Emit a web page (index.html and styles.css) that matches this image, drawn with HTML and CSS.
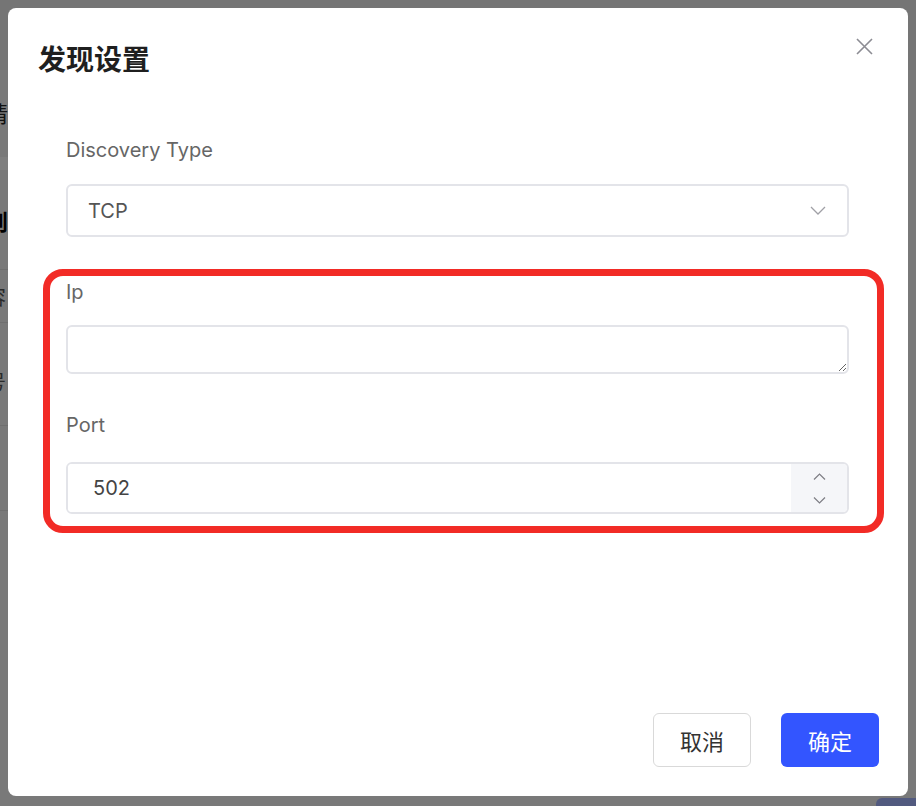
FILE: index.html
```html
<!DOCTYPE html>
<html lang="zh-CN">
<head>
<meta charset="utf-8">
<title>发现设置</title>
<link rel="stylesheet" href="styles.css">
</head>
<body>
<div class="page">
  <header class="page-top"></header>
  <main class="page-main">
    <div class="page-side">
      <p class="side-note">请</p>
      <div class="side-tabs"></div>
      <h3 class="side-title">则</h3>
      <div class="side-row side-row-a">容</div>
      <div class="side-row side-row-b">号</div>
      <div class="side-row side-row-c"></div>
      <div class="side-row side-row-d"></div>
    </div>
  </main>
  <div class="page-actions"><button class="page-btn" type="button">新增</button></div>
</div>

<div class="mask">
  <div class="modal" role="dialog" aria-labelledby="dlg-title">
    <div class="modal-header">
      <h2 class="modal-title" id="dlg-title">发现设置</h2>
      <button class="modal-close" type="button" aria-label="关闭">
        <svg width="17" height="17" viewBox="0 0 17 17"><path d="M1 1L16 16M16 1L1 16" stroke="#8c8c93" stroke-width="1.6" fill="none"/></svg>
      </button>
    </div>

    <form class="form">
      <div class="form-item">
        <label class="form-label">Discovery Type</label>
        <div class="select">
          <span class="select-value">TCP</span>
          <svg class="select-arrow" width="16" height="9" viewBox="0 0 16 9"><path d="M1 1L8 8L15 1" stroke="#a0a0a6" stroke-width="1.3" fill="none"/></svg>
        </div>
      </div>

      <div class="highlight">
        <div class="form-item">
          <label class="form-label label-ip">Ip</label>
          <textarea class="textarea" rows="1"></textarea>
        </div>
        <div class="form-item item-port">
          <label class="form-label label-port">Port</label>
          <div class="number">
            <input class="number-input" type="text" value="502">
            <div class="number-spin">
              <span class="spin-btn"><svg width="13" height="7" viewBox="0 0 13 7"><path d="M1 6.5L6.5 1L12 6.5" stroke="#7d7d84" stroke-width="1.2" fill="none"/></svg></span>
              <span class="spin-btn"><svg width="13" height="7" viewBox="0 0 13 7"><path d="M1 0.5L6.5 6L12 0.5" stroke="#7d7d84" stroke-width="1.2" fill="none"/></svg></span>
            </div>
          </div>
        </div>
      </div>
    </form>

    <div class="modal-footer">
      <button class="btn btn-default" type="button">取消</button>
      <button class="btn btn-primary" type="button">确定</button>
    </div>
  </div>
</div>
</body>
</html>
```
FILE: styles.css
```css
html, body {
  margin: 0;
  padding: 0;
}

body {
  width: 916px;
  height: 806px;
  overflow: hidden;
  font-family: Inter, "Noto Sans CJK SC", sans-serif;
}

/* page underneath the dialog */
.page {
  height: 806px;
  display: flex;
  flex-direction: column;
  background: #f2f2f2;
}

.page-top {
  height: 70px;
  flex: none;
  background: #eaeaea;
}

.page-main {
  flex: 1;
  overflow: hidden;
}

.page-side {
  width: 40px;
  margin-left: -14px;
  font-family: "Noto Sans CJK SC", sans-serif;
}

.side-note {
  margin: 30px 0 0;
  font-size: 22px;
  line-height: 24px;
  color: #222;
}

.side-tabs {
  margin-top: 33px;
  height: 13px;
  background: #ffffff;
}

.side-title {
  margin: 38px 0 0;
  font-size: 22px;
  line-height: 24px;
  font-weight: 700;
  color: #000;
}

.side-row {
  border-top: 1px solid #dedede;
  font-size: 20px;
  line-height: 24px;
  color: #555;
  box-sizing: border-box;
}

.side-row-a {
  margin-top: 37px;
  height: 53px;
  padding-top: 15px;
}

.side-row-b {
  height: 103px;
  padding-top: 47px;
}

.side-row-c {
  height: 85px;
}

.side-row-d {
  height: 40px;
}

.page-actions {
  height: 9px;
  flex: none;
  display: flex;
  justify-content: flex-end;
  overflow: hidden;
}

.page-btn {
  width: 80px;
  height: 40px;
  margin-right: -40px;
  margin-top: 1px;
  border: 0;
  border-radius: 6px;
  background: #a4b4ff;
  color: #fff;
}

/* dialog */
.mask {
  position: fixed;
  inset: 0;
  background: rgba(0, 0, 0, 0.5);
  display: flex;
  padding: 8px 8px 10px 8px;
}

.modal {
  flex: 1;
  display: flex;
  flex-direction: column;
  background: #fff;
  border-radius: 8px;
  padding: 30px 29px 29px 30px;
}

.modal-header {
  display: flex;
  justify-content: space-between;
  align-items: flex-start;
}

.modal-title {
  margin: 0;
  font-family: "Noto Sans CJK SC", sans-serif;
  font-size: 28px;
  line-height: 40px;
  font-weight: 700;
  color: #1f1f1f;
}

.modal-close {
  width: 29px;
  height: 29px;
  margin-top: -6px;
  padding: 0;
  border: 0;
  background: none;
  display: flex;
  align-items: center;
  justify-content: center;
}

.form {
  margin: 58px 30px 0 28px;
}

.form-label {
  display: block;
  font-size: 20px;
  line-height: 28px;
  color: #666;
  margin-bottom: 20px;
}

.select {
  height: 53px;
  box-sizing: border-box;
  border: 2px solid #e3e4e9;
  border-radius: 6px;
  display: flex;
  align-items: center;
  justify-content: space-between;
  padding: 0 21px 0 20px;
  font-size: 20px;
  color: #555;
}

.select-arrow {
  display: block;
}

/* highlighted group around the connection fields */
.highlight {
  margin: 32px -35px 0 -23px;
  border: 7px solid #f22b26;
  border-radius: 20px;
  padding: 2px 28px 12px 16px;
}

.label-ip {
  margin-bottom: 19px;
}

.textarea {
  display: block;
  width: 100%;
  height: 49px;
  box-sizing: border-box;
  border: 2px solid #e3e4e9;
  border-radius: 6px;
  resize: vertical;
  margin: 0;
  padding: 10px 20px;
  font: inherit;
  font-size: 20px;
  color: #444;
  outline: none;
}

.item-port {
  margin-top: 37px;
}

.label-port {
  margin-bottom: 23px;
}

.number {
  display: flex;
  height: 52px;
  box-sizing: border-box;
  border: 2px solid #e3e4e9;
  border-radius: 6px;
  overflow: hidden;
}

.number-input {
  flex: 1;
  min-width: 0;
  border: 0;
  margin: 0;
  padding: 0 0 0 25px;
  font: inherit;
  font-size: 20px;
  color: #444;
  outline: none;
  background: #fff;
}

.number-spin {
  width: 56px;
  flex: none;
  display: flex;
  flex-direction: column;
  background: #f5f6f9;
}

.spin-btn {
  flex: 1;
  display: flex;
  align-items: center;
  justify-content: center;
}

.spin-btn svg {
  display: block;
}

.modal-footer {
  margin-top: auto;
  display: flex;
  justify-content: flex-end;
  gap: 30px;
}

.btn {
  width: 98px;
  height: 54px;
  box-sizing: border-box;
  border-radius: 6px;
  font-family: "Noto Sans CJK SC", sans-serif;
  font-size: 22px;
  padding: 0;
  cursor: pointer;
}

.btn-default {
  border: 1px solid #d9d9d9;
  background: #fff;
  color: #333;
}

.btn-primary {
  border: 0;
  background: #3355ff;
  color: #fff;
}
```
